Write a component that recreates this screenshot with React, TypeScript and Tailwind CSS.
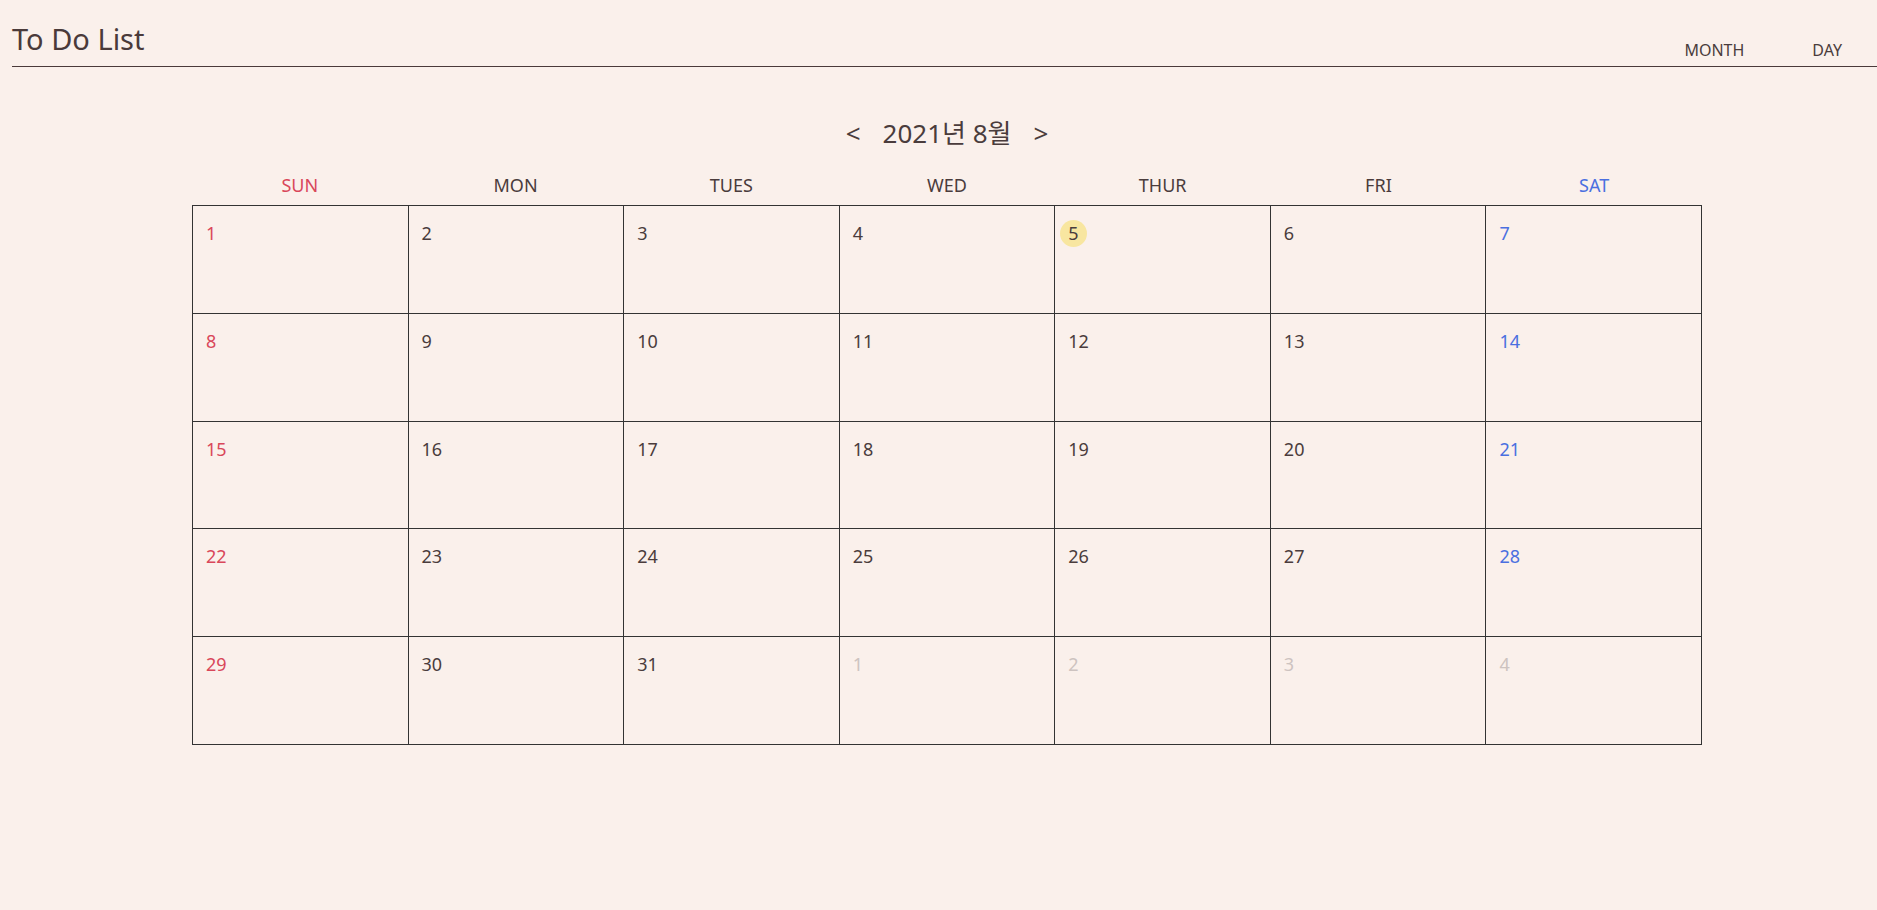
import { useState } from "react";

type Cell = { day: number; current: boolean };

const WEEK = ["SUN", "MON", "TUES", "WED", "THUR", "FRI", "SAT"];

// 2021년 8월: 1일이 일요일
const buildCells = (): Cell[] => {
  const cells: Cell[] = [];
  for (let d = 1; d <= 31; d++) cells.push({ day: d, current: true });
  for (let d = 1; cells.length < 35; d++) cells.push({ day: d, current: false });
  return cells;
};

const dayColor = (idx: number, current: boolean) => {
  if (!current) return "text-[#cdc3c0]";
  if (idx % 7 === 0) return "text-[#d9475a]";
  if (idx % 7 === 6) return "text-[#4a6fe0]";
  return "text-[#4a3c3c]";
};

const weekColor = (idx: number) => {
  if (idx === 0) return "text-[#d9475a]";
  if (idx === 6) return "text-[#4a6fe0]";
  return "text-[#4a3c3c]";
};

export default function App() {
  const [today] = useState(5);
  const cells = buildCells();

  return (
    <div className="min-h-[910px] w-full bg-[#faf0eb] text-[#4a3c3c] font-['Noto_Sans','Noto_Sans_CJK_KR',sans-serif]">
      <header className="ml-[12px] flex h-[67px] items-start justify-between border-b border-[#4a3a3a]">
        <h1 className="mt-[19px] text-[29px] leading-[40px] font-normal text-[#4a3a3a]">To Do List</h1>
        <nav className="mt-[38px] mr-[35px] flex gap-[68px] text-[16px] leading-[24px]">
          <span>MONTH</span>
          <span>DAY</span>
        </nav>
      </header>

      <main className="ml-[192px] w-[1510px] pt-[48px]">
        <div className="flex items-center justify-center gap-[22px] text-[26px] leading-[36px]">
          <span>&lt;</span>
          <span>2021년 8월</span>
          <span>&gt;</span>
        </div>

        <div className="mt-[22px] grid grid-cols-7 text-[18px] leading-[24px]">
          {WEEK.map((w, idx) => (
            <div key={w} className={`text-center ${weekColor(idx)}`}>
              {w}
            </div>
          ))}
        </div>

        <div className="mt-[8px] grid grid-cols-7 border-t border-l border-[#333333]">
          {cells.map((c, idx) => (
            <div key={idx} className="h-[107.8px] border-r border-b border-[#333333] pt-[14px] pl-[5px]">
              <span
                className={`inline-block h-[27px] rounded-full px-2 text-[18px] leading-[27px] ${dayColor(idx, c.current)} ${
                  c.current && c.day === today ? "bg-[#f8e6a0]" : ""
                }`}
              >
                {c.day}
              </span>
            </div>
          ))}
        </div>
      </main>
    </div>
  );
}
